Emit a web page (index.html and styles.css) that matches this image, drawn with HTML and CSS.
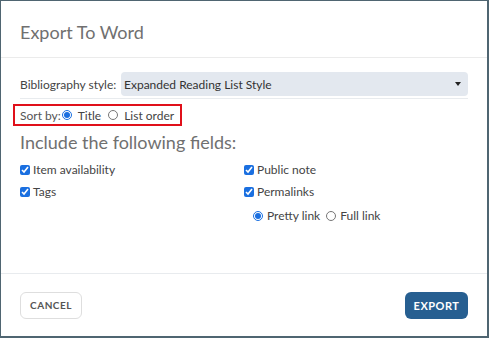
FILE: index.html
```html
<!DOCTYPE html>
<html lang="en">
<head>
    <meta charset="UTF-8">
    <meta name="viewport" content="width=device-width, initial-scale=1.0">
    <title>Export To Word</title>
    <link rel="stylesheet" href="styles.css">
</head>
<body>
    <div class="dialog">
        <div class="dialog-header">
            <h2>Export To Word</h2>
        </div>
        <div class="dialog-body">
            <div class="style-row">
                <label for="bib_style">Bibliography style:</label>
                <div class="select">
                    <span>Expanded Reading List Style</span>
                    <span class="caret"></span>
                </div>
            </div>
            <div class="sort-row">
                <span class="sort-label">Sort by:</span>
                <label class="opt"><input type="radio" name="sort" checked> Title</label>
                <label class="opt"><input type="radio" name="sort"> List order</label>
            </div>
            <h3>Include the following fields:</h3>
            <div class="fields">
                <label class="opt"><input type="checkbox" checked> Item availability</label>
                <label class="opt"><input type="checkbox" checked> Public note</label>
                <label class="opt"><input type="checkbox" checked> Tags</label>
                <div class="permalinks">
                    <label class="opt"><input type="checkbox" checked> Permalinks</label>
                    <div class="link-row">
                        <label class="opt"><input type="radio" name="link" checked> Pretty link</label>
                        <label class="opt"><input type="radio" name="link"> Full link</label>
                    </div>
                </div>
            </div>
        </div>
        <div class="dialog-footer">
            <button class="btn-cancel">Cancel</button>
            <button class="btn-export">Export</button>
        </div>
    </div>
</body>
</html>
```

FILE: styles.css
```css
body {
    margin: 0;
    padding: 1px 2px 2px 1px;
    background-color: #4f6571;
    font-family: Lato, "Noto Sans", Arial, sans-serif;
    color: #333;
}
.dialog {
    background-color: #fff;
    height: 335px;
    display: flex;
    flex-direction: column;
}
.dialog-header {
    height: 56px;
    border-bottom: 1px solid #ebebeb;
    padding: 0 19px;
    display: flex;
    align-items: center;
}
.dialog-header h2 {
    margin: 0;
    font-size: 18px;
    font-weight: normal;
    color: #707070;
    padding-top: 6px;
}
.dialog-body {
    padding: 14px 19px 0;
    flex: 1;
}
.style-row {
    display: flex;
    align-items: center;
    padding-bottom: 2px;
    border-bottom: 1px solid #e8ebee;
    font-size: 12px;
}
.style-row label {
    width: 101px;
    color: #444;
}
.select {
    flex: 1;
    height: 24px;
    background-color: #e3e8ef;
    border-radius: 4px;
    display: flex;
    align-items: center;
    justify-content: space-between;
    padding: 0 7px 0 3px;
    color: #333;
}
.caret {
    width: 0;
    height: 0;
    border-left: 3px solid transparent;
    border-right: 3px solid transparent;
    border-top: 4px solid #222;
}
.sort-row {
    box-sizing: border-box;
    margin-top: 5px;
    margin-left: -7px;
    width: 169px;
    height: 22px;
    border: 2px solid #e0101a;
    padding: 0 5px;
    display: flex;
    align-items: center;
    white-space: nowrap;
    font-size: 12px;
}
.sort-label {
    color: #555;
}
.opt {
    display: inline-flex;
    align-items: center;
    white-space: nowrap;
    font-size: 12px;
    line-height: 15px;
    color: #444;
    margin-right: 6px;
}
.opt input {
    margin: 0 3px 0 0;
    width: 10px;
    height: 10px;
    accent-color: #1a6fe0;
}
.sort-row .opt input {
    margin-left: 1px;
    margin-right: 6px;
}
h3 {
    margin: 5px 0 9px;
    font-size: 18px;
    font-weight: normal;
    color: #707070;
}
.fields {
    display: grid;
    grid-template-columns: 1fr 1fr;
    align-items: start;
    row-gap: 7px;
}
.permalinks {
    display: flex;
    flex-direction: column;
    align-items: flex-start;
}
.link-row {
    display: flex;
    margin-top: 9px;
    padding-left: 9px;
}
.link-row .opt input {
    margin-right: 4px;
}
.dialog-footer {
    height: 62px;
    border-top: 1px solid #e8ebee;
    padding: 0 19px;
    display: flex;
    align-items: center;
    justify-content: space-between;
}
.btn-cancel,
.btn-export {
    font-family: inherit;
    font-size: 10px;
    font-weight: bold;
    letter-spacing: 0.5px;
    text-transform: uppercase;
    height: 27px;
    border-radius: 6px;
    cursor: pointer;
}
.btn-cancel {
    width: 62px;
    background-color: #fff;
    border: 1px solid #dedede;
    color: #555;
}
.btn-export {
    width: 63px;
    font-size: 11px;
    background-color: #275f91;
    border: none;
    color: #fff;
}
```
